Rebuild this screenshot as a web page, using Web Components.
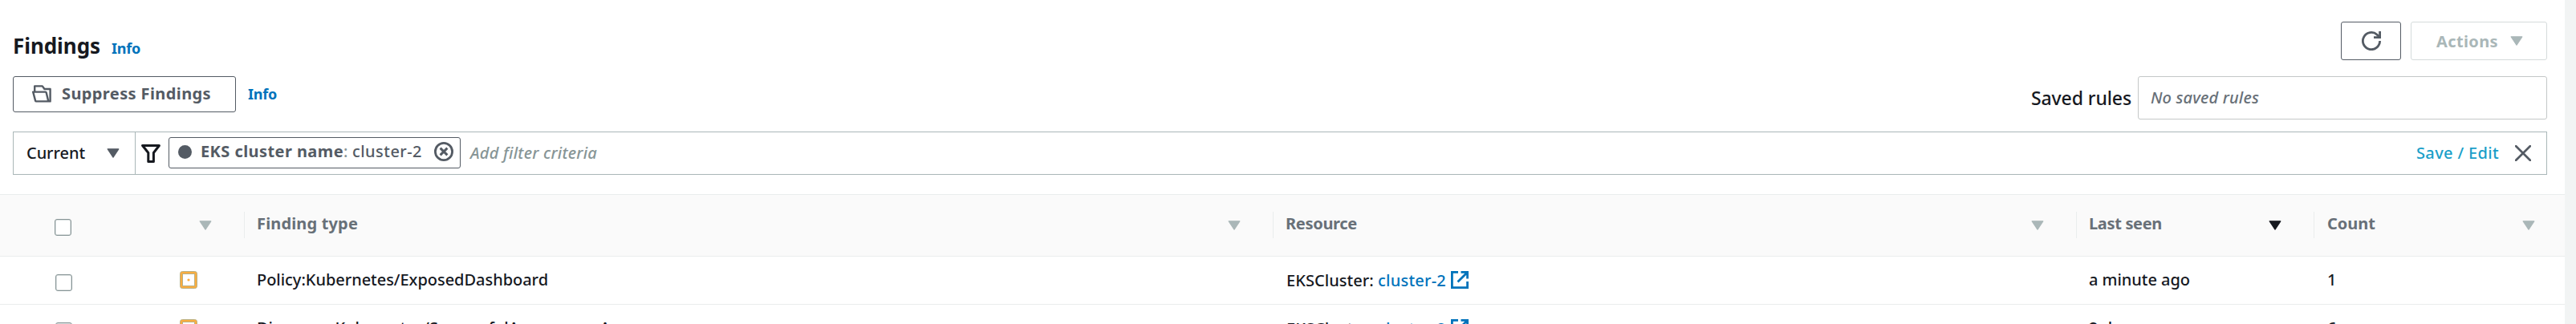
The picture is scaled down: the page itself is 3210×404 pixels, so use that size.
<!DOCTYPE html>
<html lang="en">
<head>
<meta charset="utf-8">
<title>Findings</title>
<style>
html,body{margin:0;height:404px;overflow:hidden;background:#f2f4f4}
body{font:500 20px/27px "Noto Sans","Open Sans",sans-serif;color:#16191f}
</style>
</head>
<body>
<findings-page></findings-page>
<script>
const define=(name,html,ready)=>{
  const t=document.createElement('template');
  t.innerHTML=html;
  customElements.define(name,class extends HTMLElement{
    connectedCallback(){
      if(this.shadowRoot)return;
      this.attachShadow({mode:'open'}).append(t.content.cloneNode(true));
      if(ready)ready(this,this.shadowRoot);
    }
  });
};

/* One line of text, tracked so that it fills the width given in "w". */
define('ui-text',`<style>
:host{display:block;white-space:pre;flex:none}
:host([bold]){font-weight:700}
:host([italic]){font-style:italic}
:host([size="18"]){font-size:18px;line-height:24px}
:host([size="23"]){font-size:23px;line-height:32px}
:host([size="26"]){font-size:26px;line-height:36px}
:host([tone="link"]){color:#0073bb}
:host([tone="cyan"]){color:#1a9fc9}
:host([tone="grey"]){color:#687078}
:host([tone="slate"]){color:#545b64}
:host([tone="hint"]){color:#879596}
:host([tone="off"]){color:#aab7b8}
span{display:inline-block}
</style><span><slot></slot></span>`,(el,root)=>{
  const w=+el.getAttribute('w'),s=root.querySelector('span');
  if(w){
    s.style.letterSpacing=(w-s.getBoundingClientRect().width)/el.textContent.length+'px';
    el.style.width=w+'px';
  }
});

define('ui-caret',`<style>
:host{display:block;flex:none;width:16px;height:12px;color:#aab7b8}
:host([dark]){color:#16191f}:host([slate]){color:#545b64}svg{display:block}
</style><svg width="16" height="12" viewBox="0 0 16 12"><path d="M1.2.8h13.6L8 11.2z" fill="currentColor" stroke="currentColor" stroke-width="1.2" stroke-linejoin="round"/></svg>`);

const icons={
  folder:['0 0 24 22','<path d="M3.2 8V1.4h9.6l2.6 3.6h7.2v15.4h-4M1.2 8.6h15.4q.9 0 1.1.9l2.6 10.9H5.2q-.9 0-1.1-.8z" stroke-width="2.4" stroke-linejoin="round"/>'],
  refresh:['0 0 24 24','<path d="M22.6 12.1A10.6 10.6 0 1 1 19.1 4.2L22 7.2" stroke-width="2.8"/><path d="M22.6 0v7.6H15" stroke-width="2.8"/>'],
  funnel:['0 0 24 23','<path d="M1.6 1.5h20.8L15.4 10.5v11H8.8v-11z" stroke-width="3" stroke-linejoin="round"/>'],
  remove:['0 0 24 24','<circle cx="12" cy="12" r="10.6" stroke-width="2.8"/><path d="m7.6 7.6 8.8 8.8m0-8.8-8.8 8.8" stroke-width="2.9"/>'],
  close:['0 0 20 20','<path d="m1.2 1.2 17.6 17.6m0-17.6L1.2 18.8" stroke-width="2.7" stroke-linecap="round"/>'],
  external:['0 0 22 22','<path d="M9 1.4H1.4v19.2h19.2V13M12.5 1.4h8.1v8.1M20.3 1.7 8.5 13.5" stroke-width="2.8"/>'],
  severity:['0 0 22 22','<rect x=".5" y=".5" width="21" height="21" rx="2.8" fill="#fbad3f" stroke="#b9b183" stroke-width="1"/><rect x="3.5" y="3.5" width="15" height="15" fill="#fff" stroke="#b9b183" stroke-width="1"/><circle cx="11" cy="11" r="1.6" fill="#fbad3f" stroke="none"/>'],
  dot:['0 0 16 16','<circle cx="8" cy="8" r="8" fill="currentColor" stroke="none"/>']
};
define('ui-icon',`<style>:host{display:block;flex:none}svg{display:block;width:100%;height:100%}</style>
<svg fill="none" stroke="currentColor"></svg>`,(el,root)=>{
  const [box,body]=icons[el.getAttribute('name')],s=root.querySelector('svg');
  s.setAttribute('viewBox',box);s.innerHTML=body;
  const [,,w,h]=box.split(' ');
  el.style.width=(el.getAttribute('width')||w)+'px';el.style.height=(el.getAttribute('height')||h)+'px';
});

define('ui-button',`<style>
:host{display:flex;box-sizing:border-box;flex:none;border:1px solid #545b64;border-radius:3px;background:#fff;color:#545b64}
:host([disabled]){border-color:#d5dbdb;color:#aab7b8}
</style><slot></slot>`);

define('ui-check',`<style>
:host{display:block;box-sizing:border-box;flex:none;width:21px;height:21px;border:1px solid #879596;border-radius:3px;background:#fff;box-shadow:inset 0 0 0 .5px #b5bfc0}
</style>`);

define('findings-header',`<style>
:host{display:block;padding:27px 22px 0 16px}
.row{display:flex;justify-content:space-between;align-items:flex-start}
.row+.row{margin-top:20px}
.side{display:flex}
.title{align-items:baseline;padding-top:12px;gap:14px}
.refresh{width:75px;height:48px;padding:11px 0 0 25px;margin-right:12px}
.actions{width:170px;height:48px;padding:10px 0 0 31px}
.actions ui-caret{margin:7px 0 0 15px}
.suppress{width:278px;height:45px;padding:7px 0 0 23px}
.suppress ui-icon{margin:3px 13px 0 0}
.info{margin:10px 0 0 15px}
.label{margin:11px 8px 0 0}
.box{box-sizing:border-box;width:510px;height:54px;border:1px solid #c4c8c8;border-radius:3px;padding:12px 15px}
</style>
<div class="row">
  <div class="side title"><ui-text bold size="26" w="109">Findings</ui-text><ui-text bold size="18" tone="link" w="36">Info</ui-text></div>
  <div class="side">
    <ui-button class="refresh"><ui-icon name="refresh"></ui-icon></ui-button>
    <ui-button class="actions" disabled><ui-text bold tone="off" w="77">Actions</ui-text><ui-caret></ui-caret></ui-button>
  </div>
</div>
<div class="row">
  <div class="side">
    <ui-button class="suppress"><ui-icon name="folder"></ui-icon><ui-text bold tone="slate" w="186">Suppress Findings</ui-text></ui-button>
    <ui-text class="info" bold size="18" tone="link" w="36">Info</ui-text>
  </div>
  <div class="side">
    <ui-text class="label" size="23" w="125">Saved rules</ui-text>
    <div class="box"><ui-text italic tone="grey" w="135">No saved rules</ui-text></div>
  </div>
</div>`);

define('filter-bar',`<style>
:host{display:flex;box-sizing:border-box;height:54px;margin:15px 22px 0 16px;border:1px solid #aab7b8;background:#fff}
.mode{display:flex;box-sizing:border-box;width:152px;border-right:1px solid #aab7b8;padding:12px 0 0 16px}
.mode ui-caret{margin:8px 0 0 27px}
.funnel{margin:15px 10px 0 7px}
.chip{display:flex;box-sizing:border-box;width:364px;height:39px;margin-top:6px;border:1px solid #545b64;border-radius:3px;padding:3px 0 0 11px;color:#545b64}
.chip .dot{margin:6px 11px 0 0}
.chip .x{margin:2px 0 0 15px}
.hint{margin:12px auto 0 12px}
.save{margin-top:12px}
.close{margin:16px 19px 0 20px;color:#545b64}
</style>
<div class="mode"><ui-text w="73">Current</ui-text><ui-caret slate></ui-caret></div>
<ui-icon class="funnel" name="funnel"></ui-icon>
<div class="chip"><ui-icon class="dot" name="dot" width="17" height="17"></ui-icon><ui-text bold tone="slate" w="178">EKS cluster name</ui-text><ui-text tone="hint" w="11">: </ui-text><ui-text tone="slate" w="87">cluster-2</ui-text><ui-icon class="x" name="remove"></ui-icon></div>
<ui-text class="hint" italic tone="hint" w="158">Add filter criteria</ui-text>
<ui-text class="save" tone="cyan" w="103">Save / Edit</ui-text>
<ui-icon class="close" name="close"></ui-icon>`);

define('table-head',`<style>
:host{display:grid;grid-template-columns:305px 1282px 1001px 296px 312px;box-sizing:border-box;height:78px;border:solid #eaeded;border-width:1px 0;background:#fafafa}
div{display:flex;align-items:flex-start;justify-content:space-between;box-sizing:border-box;height:33px;margin-top:21px;padding:0 40px 0 15px;border-right:1px solid #eaeded}
.lead{padding-left:68px}
.count{border:0;padding:0 37px 0 16px}
ui-text{margin-top:1px}ui-caret{margin-top:11px}ui-check{margin-top:9px}
</style>
<div class="lead"><ui-check></ui-check><ui-caret></ui-caret></div>
<div><ui-text bold tone="grey" w="126">Finding type</ui-text><ui-caret></ui-caret></div>
<div><ui-text bold tone="grey" w="89">Resource</ui-text><ui-caret></ui-caret></div>
<div><ui-text bold tone="grey" w="91">Last seen</ui-text><ui-caret dark></ui-caret></div>
<div class="count"><ui-text bold tone="grey" w="60">Count</ui-text><ui-caret></ui-caret></div>`);

define('finding-row',`<style>
:host{display:grid;grid-template-columns:305px 1282px 1001px 296px 312px;box-sizing:border-box;height:60px;border-bottom:1px solid #eaeded;background:#fff}
div{display:flex;align-items:flex-start;padding:15px 0 0 15px}
.res{padding:16px 0 0 16px}
.count{padding-left:16px}
.lead{padding:22px 0 0 69px}
.lead ui-icon{margin:-4px 0 0 134px}
.res ui-icon{margin:2px 0 0 6px;color:#0073bb}
</style>
<div class="lead"><ui-check></ui-check><ui-icon name="severity"></ui-icon></div>
<div class="type"></div>
<div class="res"><ui-text w="114">EKSCluster: </ui-text><ui-text tone="link" w="85">cluster-2</ui-text><ui-icon name="external"></ui-icon></div>
<div class="seen"></div>
<div class="count"></div>`,(el,root)=>{
  for(const k of ['type','seen','count']){
    const t=document.createElement('ui-text');
    const [text,w]=el.getAttribute(k).split('|');
    t.textContent=text;if(w)t.setAttribute('w',w);
    root.querySelector('.'+k).append(t);
  }
});

define('findings-page',`<style>
:host{display:block;width:3196px;height:404px;overflow:hidden;background:#fff}
table-head{margin-top:24px}
</style>
<findings-header></findings-header>
<filter-bar></filter-bar>
<table-head></table-head>
<finding-row type="Policy:Kubernetes/ExposedDashboard|363" seen="a minute ago|126" count="1"></finding-row>
<finding-row type="Discovery:Kubernetes/SuccessfulAnonymousAccess|491" seen="2 days ago|103" count="6"></finding-row>`);
</script>
</body>
</html>
